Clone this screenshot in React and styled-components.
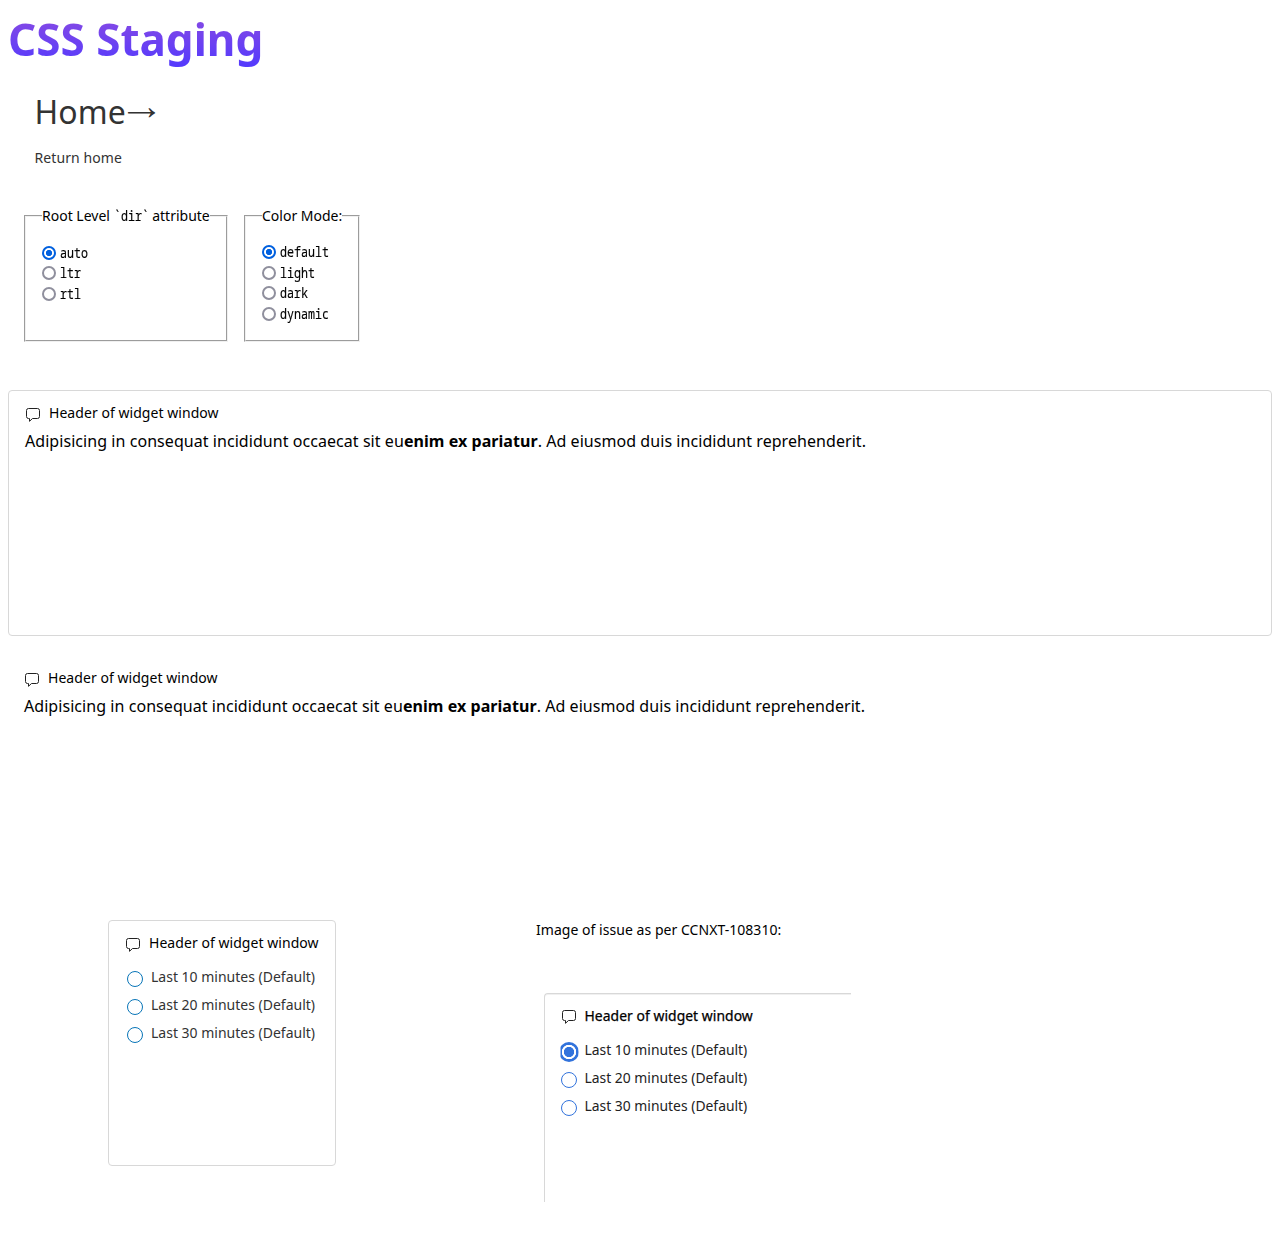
import React from "react";
import styled, { createGlobalStyle, css } from "styled-components";

const Global = createGlobalStyle`
  * { box-sizing: border-box; }
  body {
    margin: 0;
    background: #fff;
    color: #000;
    font-family: "Noto Sans", sans-serif;
    font-size: 14px;
    line-height: 20px;
  }
`;

const Page = styled.main`
  display: flex;
  flex-direction: column;
  padding: 7px 8px 0;
  height: 1243px;
`;

const Title = styled.h1`
  align-self: flex-start;
  margin: 0;
  font-size: 44px;
  line-height: 64px;
  font-weight: 700;
  color: transparent;
  background: linear-gradient(#904ddf, #4f38ff);
  background-clip: text;
  -webkit-background-clip: text;
`;

const HomeLink = styled.a`
  display: flex;
  flex-direction: column;
  align-items: flex-start;
  gap: 16px;
  margin: 21px 0 0 26.5px;
  color: #333;
  text-decoration: none;
  letter-spacing: 0.08px;
`;

const HomeTitle = styled.span`
  font-size: 32px;
  line-height: 40px;
`;

const Arrow = styled.span`
  margin-left: -4px;
  font-family: "Noto Sans Symbols", sans-serif;
  font-size: 39px;
  line-height: 0;
  vertical-align: -2px;
`;

const Settings = styled.div`
  display: flex;
  gap: 16px;
  margin: 38px 0 0 16px;
  height: 136px;
`;

const Group = styled.fieldset`
  margin: 0;
  min-width: 0;
  width: ${(p) => p.$width}px;
  padding: 16px;
  border: 2px groove #f0f0f0;
`;

const Legend = styled.legend`
  padding: 0 0 ${(p) => p.$extra || 0}px;
  white-space: nowrap;
`;

const CodeBox = styled.code`
  display: inline-block;
  width: ${(p) => p.$chars * 7}px;
  font-family: "Noto Sans Mono", monospace;
  font-size: 14px;
  white-space: nowrap;
  -webkit-text-stroke: 0.15px #000;
  transform: scaleX(0.8333);
  transform-origin: left;
`;

const Option = styled.label`
  display: flex;
  align-items: center;
  gap: 3.5px;
  height: 20.5px;
`;

const NativeRadio = styled.input`
  appearance: none;
  flex: none;
  width: 14px;
  height: 14px;
  margin: 0;
  border: 2px solid #8f8f9d;
  border-radius: 50%;
  background: #fff;
  &:checked {
    border-color: #0060df;
    background: radial-gradient(circle, #0060df 2.8px, #fff 3.4px);
  }
`;

const Widget = styled.section`
  width: ${(p) => p.$width || "auto"};
  height: ${(p) => p.$height || 246}px;
  margin-top: ${(p) => p.$top || 0}px;
  padding: 12px 16px;
  border: 1px solid ${(p) => (p.$plain ? "transparent" : "#d8d8d8")};
  border-radius: 4px;
  ${(p) => p.$plain && css`padding-left: 15px;`}
  ${(p) =>
    p.$cropped &&
    css`
      border-right: 0;
      border-bottom: 0;
      border-radius: 4px 0 0 0;
      box-shadow: inset 0 1px 0 #f0f0f0;
    `}
`;

const WidgetHeader = styled.header`
  display: flex;
  gap: 8px;
  height: 20px;
  white-space: nowrap;
  letter-spacing: 0.05px;
  ${(p) =>
    p.$strong &&
    css`
      margin-left: -0.5px;
      font-size: 13.9px;
      -webkit-text-stroke: 0.25px #000;
    `}
`;

const BubbleIcon = styled.svg`
  flex: none;
  width: 16px;
  height: 16px;
  margin-top: ${(p) => p.$top}px;
`;

const Paragraph = styled.p`
  margin: 6px 0 0;
  font-size: 16px;
  line-height: 24px;
  letter-spacing: 0.056px;
`;

const Columns = styled.div`
  display: flex;
  margin-top: 19px;
  padding-left: 100px;
`;

const Issue = styled.div`
  display: flex;
  flex-direction: column;
  width: 315px;
  margin-left: 200px;
`;

const IssueCaption = styled.span`
  letter-spacing: 0.04px;
`;

const IssueFrame = styled.div`
  margin: 53px 0 0 8px;
`;

const Choices = styled.div`
  display: flex;
  flex-direction: column;
  gap: 8px;
  margin: 14px 0 0 ${(p) => p.$left}px;
`;

const Choice = styled.label`
  display: flex;
  gap: 8px;
  height: 20px;
  color: ${(p) => p.$ink};
  white-space: nowrap;
  font-size: ${(p) => p.$size}px;
`;

const Ring = styled.span`
  flex: none;
  width: 16px;
  height: 16px;
  margin-top: 4px;
  border: 1px solid ${(p) => p.$color};
  border-radius: 50%;
  background: #fff;
  ${(p) =>
    p.$checked &&
    css`
      width: 20px;
      height: 20px;
      margin: 2px -2px -2px;
      border: 0;
      background: radial-gradient(circle at center, ${p.$color} 4.8px, #fff 5.4px, #fff 6.9px, ${p.$color} 7.5px);
      clip-path: inset(0 0 0 2px);
    `}
`;

function Code({ children }) {
  return <CodeBox $chars={children.length}>{children}</CodeBox>;
}

function Header({ strong, iconTop = 4 }) {
  return (
    <WidgetHeader $strong={strong}>
      <BubbleIcon $top={iconTop} viewBox="0 0 16 16" fill="none" stroke="#222" strokeLinejoin="round">
        <path d="M3.5 1.5h9a2 2 0 0 1 2 2v6a2 2 0 0 1-2 2H7.500L4.500 14.300v-2.800h-1a2 2 0 0 1-2-2V3.500a2 2 0 0 1 2-2z" />
      </BubbleIcon>
      Header of widget window
    </WidgetHeader>
  );
}

function Sample() {
  return (
    <Paragraph>
      Adipisicing in consequat incididunt occaecat sit eu<b>enim ex pariatur</b>. Ad eiusmod duis incididunt
      reprehenderit.
    </Paragraph>
  );
}

function RadioGroup({ name, legend, legendExtra, options, width }) {
  return (
    <Group $width={width}>
      <Legend $extra={legendExtra}>{legend}</Legend>
      {options.map((option, i) => (
        <Option key={option}>
          <NativeRadio type="radio" name={name} defaultChecked={i === 0} />
          <Code>{option}</Code>
        </Option>
      ))}
    </Group>
  );
}

function Durations({ color, ink = "#333", left, size = 14, checked }) {
  return (
    <Choices $left={left}>
      {[10, 20, 30].map((n) => (
        <Choice key={n} $size={size} $ink={ink}>
          <Ring $color={color} $checked={checked === n} />
          {`Last ${n} minutes (Default)`}
        </Choice>
      ))}
    </Choices>
  );
}

export default function App() {
  return (
    <>
      <Global />
      <Page>
        <Title>CSS Staging</Title>
        <HomeLink href="#">
          <HomeTitle>
            Home<Arrow>→</Arrow>
          </HomeTitle>
          <span>Return home</span>
        </HomeLink>
        <Settings>
          <RadioGroup
            name="dir"
            width={204}
            legendExtra={0.6}
            legend={
              <>
                Root Level <Code>`dir`</Code> attribute
              </>
            }
            options={["auto", "ltr", "rtl"]}
          />
          <RadioGroup name="mode" width={116} legend="Color Mode:" options={["default", "light", "dark", "dynamic"]} />
        </Settings>
        <Widget $top={48}>
          <Header />
          <Sample />
        </Widget>
        <Widget $plain $top={19}>
          <Header />
          <Sample />
        </Widget>
        <Columns>
          <Widget $width="228px">
            <Header />
            <Durations color="#0875b8" left={2} />
          </Widget>
          <Issue>
            <IssueCaption>Image of issue as per CCNXT-108310:</IssueCaption>
            <IssueFrame>
              <Widget $cropped $height={209}>
                <Header strong iconTop={3} />
                <Durations color="#3273dc" ink="#222" left={-0.5} size={13.9} checked={10} />
              </Widget>
            </IssueFrame>
          </Issue>
        </Columns>
      </Page>
    </>
  );
}
